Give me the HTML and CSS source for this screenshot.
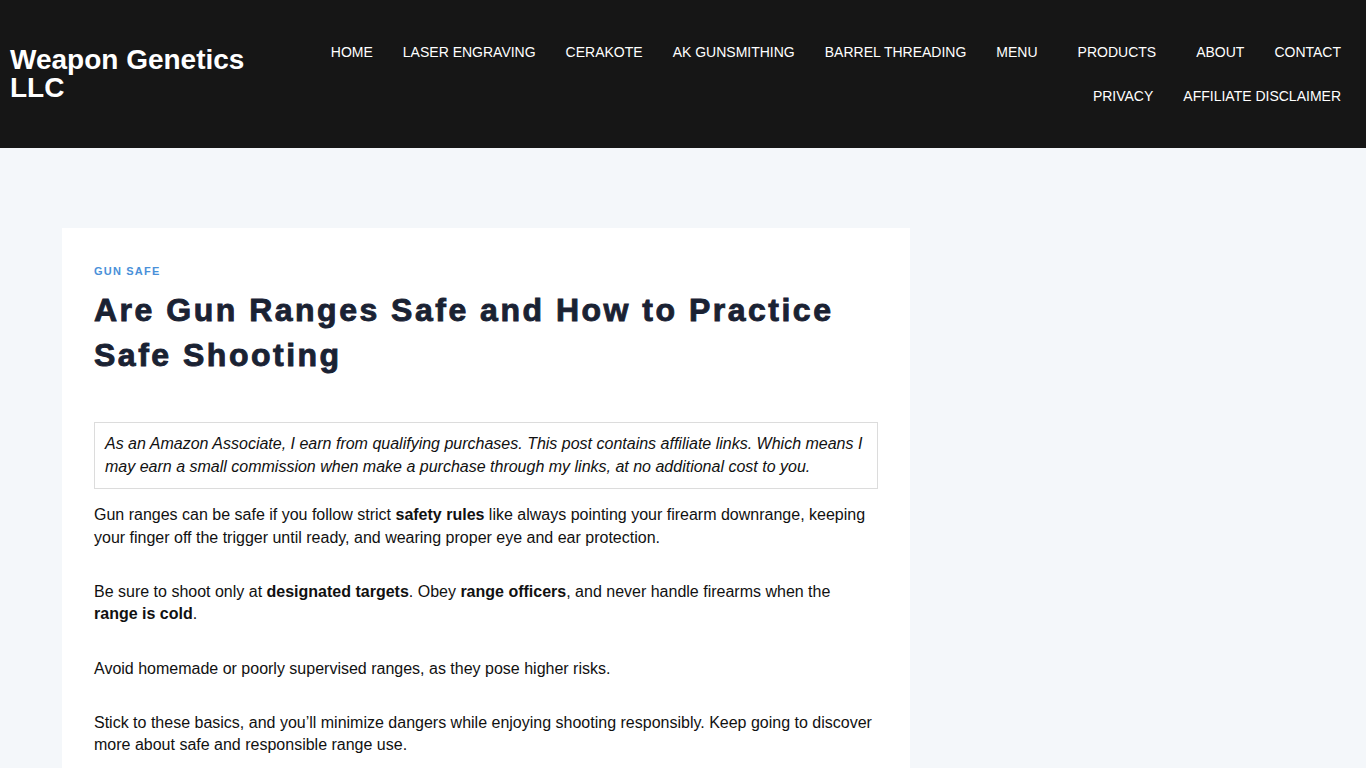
FILE: index.html
```html
<!DOCTYPE html>
<html lang="en">
<head>
<meta charset="utf-8">
<title>Are Gun Ranges Safe and How to Practice Safe Shooting</title>
<link rel="stylesheet" href="styles.css">
</head>
<body>
<header class="site-header">
  <div class="brand"><a class="brand-title" href="#">Weapon Genetics LLC</a></div>
  <nav class="main-nav">
    <a class="nav-item" href="#">HOME</a>
    <a class="nav-item" href="#">LASER ENGRAVING</a>
    <a class="nav-item" href="#">CERAKOTE</a>
    <a class="nav-item" href="#">AK GUNSMITHING</a>
    <a class="nav-item" href="#">BARREL THREADING</a>
    <a class="nav-item has-sub" href="#">MENU</a>
    <a class="nav-item has-sub" href="#">PRODUCTS</a>
    <a class="nav-item" href="#">ABOUT</a>
    <a class="nav-item" href="#">CONTACT</a>
    <a class="nav-item" href="#">PRIVACY</a>
    <a class="nav-item" href="#">AFFILIATE DISCLAIMER</a>
  </nav>
</header>
<div class="site-content">
  <main class="main-column">
    <article class="entry">
      <div class="entry-cat"><a href="#">GUN SAFE</a></div>
      <h1 class="entry-title">Are Gun Ranges Safe and How to Practice Safe Shooting</h1>
      <div class="entry-content">
        <div class="disclaimer">As an Amazon Associate, I earn from qualifying purchases. This post contains affiliate links. Which means I may earn a small commission when make a purchase through my links, at no additional cost to you.</div>
        <p>Gun ranges can be safe if you follow strict <strong>safety rules</strong> like always pointing your firearm downrange, keeping your finger off the trigger until ready, and wearing proper eye and ear protection.</p>
        <p>Be sure to shoot only at <strong>designated targets</strong>. Obey <strong>range officers</strong>, and never handle firearms when the <strong>range is cold</strong>.</p>
        <p>Avoid homemade or poorly supervised ranges, as they pose higher risks.</p>
        <p>Stick to these basics, and you’ll minimize dangers while enjoying shooting responsibly. Keep going to discover more about safe and responsible range use.</p>
      </div>
    </article>
  </main>
</div>
</body>
</html>
```
FILE: styles.css
```css
* { box-sizing: border-box; }
html, body { margin: 0; padding: 0; }
body {
  background: #f4f7fa;
  font-family: "Liberation Sans", Arial, sans-serif;
  color: #111;
}
a { text-decoration: none; color: inherit; }

.site-header {
  background: #161616;
  height: 148px;
  padding: 30px 10px;
  display: flex;
  align-items: center;
}
.brand {
  width: 290px;
  flex-shrink: 0;
}
.brand-title {
  display: block;
  max-width: 250px;
  color: #fff;
  font-weight: 700;
  font-size: 28px;
  line-height: 28px;
}
.main-nav {
  flex: 1;
  display: flex;
  flex-wrap: wrap;
  justify-content: flex-end;
}
.nav-item {
  color: #fff;
  font-size: 14px;
  line-height: 44px;
  padding: 0 15px;
  white-space: nowrap;
}
.nav-item.has-sub { padding-right: 25px; }

.site-content {
  padding: 80px 0 0 62px;
}
.main-column { width: 848px; }
.entry {
  background: #fff;
  padding: 33px 32px 40px;
}
.entry-cat {
  font-size: 11px;
  font-weight: 700;
  letter-spacing: 1.2px;
  line-height: 20px;
  color: #4a90d9;
}
.entry-title {
  margin: 7px 0 0;
  font-size: 32px;
  line-height: 45px;
  font-weight: 700;
  letter-spacing: 2.5px;
  color: #1a2233;
  -webkit-text-stroke: 0.9px #1a2233;
}
.entry-content {
  padding-top: 44px;
  font-size: 16px;
  line-height: 22.6px;
}
.disclaimer {
  border: 1px solid #dcdcdc;
  padding: 10px 10px;
  font-style: italic;
  margin-bottom: 15px;
}
.entry-content p { margin: 0 0 31.5px; }
.entry-content strong { font-weight: 700; }
```
